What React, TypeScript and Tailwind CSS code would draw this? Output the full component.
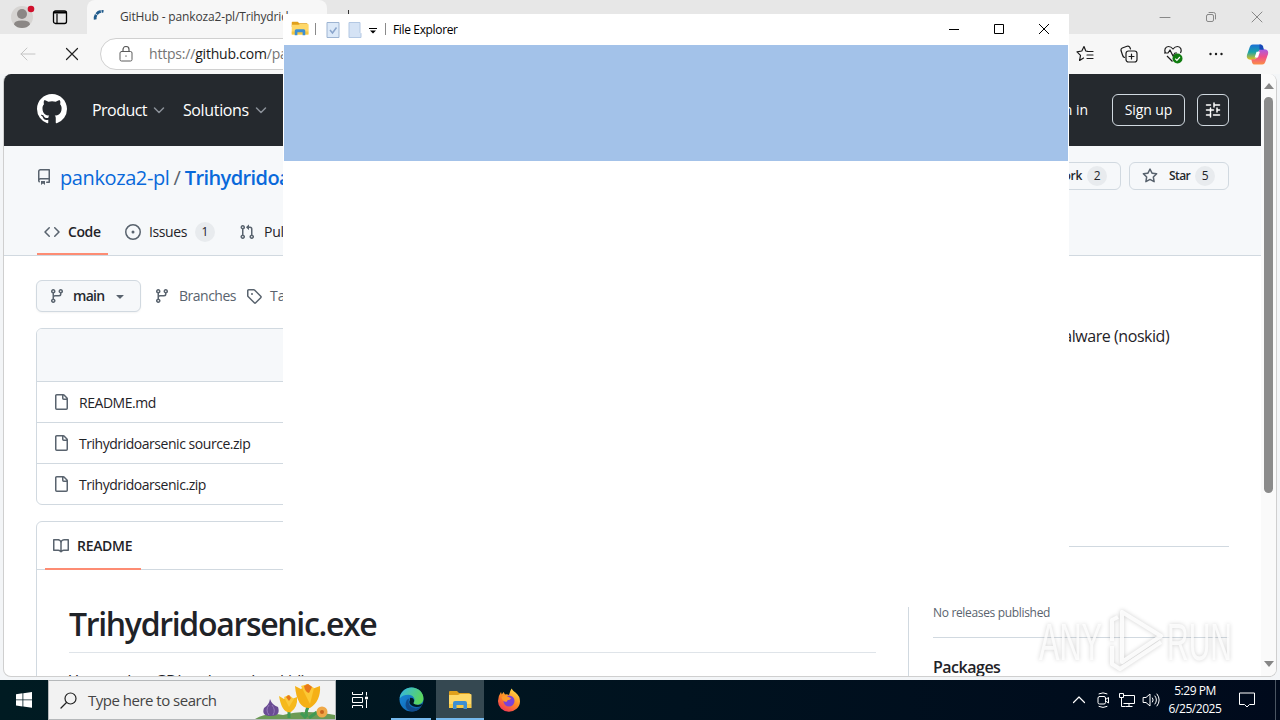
import type { ReactNode } from "react";
import clsx from "clsx";

const PATHS = {
  github:
    "M8 0c4.42 0 8 3.58 8 8a8.013 8.013 0 0 1-5.45 7.59c-.4.08-.55-.17-.55-.38 0-.27.01-1.13.01-2.2 0-.75-.25-1.23-.54-1.48 1.78-.2 3.65-.88 3.65-3.95 0-.88-.31-1.59-.82-2.15.08-.2.36-1.02-.08-2.12 0 0-.67-.22-2.2.82-.64-.18-1.32-.27-2-.27-.68 0-1.36.09-2 .27-1.53-1.03-2.2-.82-2.2-.82-.44 1.1-.16 1.92-.08 2.12-.51.56-.82 1.28-.82 2.15 0 3.06 1.86 3.75 3.64 3.95-.23.2-.44.55-.51 1.07-.46.21-1.61.55-2.33-.66-.15-.24-.6-.83-1.23-.82-.67.01-.27.38.01.53.34.19.73.9.82 1.13.16.45.68 1.31 2.69.94 0 .67.01 1.3.01 1.49 0 .21-.15.45-.55.38A7.995 7.995 0 0 1 0 8c0-4.42 3.58-8 8-8Z",
  repo: "M2 2.5A2.5 2.5 0 0 1 4.5 0h8.75a.75.75 0 0 1 .75.75v12.5a.75.75 0 0 1-.75.75h-2.5a.75.75 0 0 1 0-1.5h1.75v-2h-8a1 1 0 0 0-.714 1.7.75.75 0 1 1-1.072 1.05A2.495 2.495 0 0 1 2 11.5Zm10.5-1h-8a1 1 0 0 0-1 1v6.708A2.486 2.486 0 0 1 4.5 9h8ZM5 12.25a.25.25 0 0 1 .25-.25h3.5a.25.25 0 0 1 .25.25v3.25a.25.25 0 0 1-.4.2l-1.45-1.087a.249.249 0 0 0-.3 0L5.4 15.7a.25.25 0 0 1-.4-.2Z",
  code: "m11.28 3.22 4.25 4.25a.75.75 0 0 1 0 1.06l-4.25 4.25a.749.749 0 0 1-1.275-.326.749.749 0 0 1 .215-.734L13.94 8l-3.72-3.72a.749.749 0 0 1 .326-1.275.749.749 0 0 1 .734.215Zm-6.56 0a.751.751 0 0 1 1.042.018.751.751 0 0 1 .018 1.042L2.06 8l3.72 3.72a.749.749 0 0 1-.326 1.275.749.749 0 0 1-.734-.215L.47 8.53a.75.75 0 0 1 0-1.06Z",
  issue:
    "M8 9.5a1.5 1.5 0 1 0 0-3 1.5 1.5 0 0 0 0 3ZM8 0a8 8 0 1 1 0 16A8 8 0 0 1 8 0ZM1.5 8a6.5 6.5 0 1 0 13 0 6.5 6.5 0 0 0-13 0Z",
  pull: "M1.5 3.25a2.25 2.25 0 1 1 3 2.122v5.256a2.251 2.251 0 1 1-1.5 0V5.372A2.25 2.25 0 0 1 1.5 3.25Zm5.677-.177L9.573.677A.25.25 0 0 1 10 .854V2.5h1A2.5 2.5 0 0 1 13.5 5v5.628a2.251 2.251 0 1 1-1.5 0V5a1 1 0 0 0-1-1h-1v1.646a.25.25 0 0 1-.427.177L7.177 3.427a.25.25 0 0 1 0-.354ZM3.75 2.5a.75.75 0 1 0 0 1.5.75.75 0 0 0 0-1.5Zm0 9.5a.75.75 0 1 0 0 1.5.75.75 0 0 0 0-1.5Zm8.25.75a.75.75 0 1 0 1.5 0 .75.75 0 0 0-1.5 0Z",
  branch:
    "M9.5 3.25a2.25 2.25 0 1 1 3 2.122V6A2.5 2.5 0 0 1 10 8.5H6a1 1 0 0 0-1 1v1.128a2.251 2.251 0 1 1-1.5 0V5.372a2.25 2.25 0 1 1 1.5 0v1.836A2.493 2.493 0 0 1 6 7h4a1 1 0 0 0 1-1v-.628A2.25 2.25 0 0 1 9.5 3.25Zm-6 0a.75.75 0 1 0 1.5 0 .75.75 0 0 0-1.5 0Zm8.25-.75a.75.75 0 1 0 0 1.5.75.75 0 0 0 0-1.5ZM4.25 12a.75.75 0 1 0 0 1.5.75.75 0 0 0 0-1.5Z",
  tag: "M1 7.775V2.75C1 1.784 1.784 1 2.75 1h5.025c.464 0 .91.184 1.238.513l6.25 6.25a1.75 1.75 0 0 1 0 2.474l-5.026 5.026a1.75 1.75 0 0 1-2.474 0l-6.25-6.25A1.752 1.752 0 0 1 1 7.775Zm1.5 0c0 .066.026.13.073.177l6.25 6.25a.25.25 0 0 0 .354 0l5.025-5.025a.25.25 0 0 0 0-.354l-6.25-6.25a.25.25 0 0 0-.177-.073H2.75a.25.25 0 0 0-.25.25ZM6 5a1 1 0 1 1 0 2 1 1 0 0 1 0-2Z",
  file: "M2 1.75C2 .784 2.784 0 3.75 0h6.586c.464 0 .909.184 1.237.513l2.914 2.914c.329.328.513.773.513 1.237v9.586A1.75 1.75 0 0 1 13.25 16h-9.5A1.75 1.75 0 0 1 2 14.25Zm1.75-.25a.25.25 0 0 0-.25.25v12.5c0 .138.112.25.25.25h9.5a.25.25 0 0 0 .25-.25V6h-2.75A1.75 1.75 0 0 1 9 4.25V1.5Zm6.75.062V4.25c0 .138.112.25.25.25h2.688l-.011-.013-2.914-2.914-.013-.011Z",
  book: "M0 1.75A.75.75 0 0 1 .75 1h4.253c1.227 0 2.317.59 3 1.501A3.743 3.743 0 0 1 11.006 1h4.245a.75.75 0 0 1 .75.75v10.5a.75.75 0 0 1-.75.75h-4.507a2.25 2.25 0 0 0-1.591.659l-.622.621a.75.75 0 0 1-1.06 0l-.622-.621A2.25 2.25 0 0 0 5.258 13H.75a.75.75 0 0 1-.75-.75Zm7.251 10.324.004-5.073-.002-2.253A2.25 2.25 0 0 0 5.003 2.5H1.5v9h3.757a3.75 3.75 0 0 1 1.994.574ZM8.755 4.75l-.004 7.322a3.752 3.752 0 0 1 1.992-.572H14.5v-9h-3.495a2.25 2.25 0 0 0-2.25 2.25Z",
  star: "M8 .25a.75.75 0 0 1 .673.418l1.882 3.815 4.21.612a.75.75 0 0 1 .416 1.279l-3.046 2.97.719 4.192a.751.751 0 0 1-1.088.791L8 12.347l-3.766 1.98a.75.75 0 0 1-1.088-.79l.72-4.194L.818 6.374a.75.75 0 0 1 .416-1.28l4.21-.611L7.327.668A.75.75 0 0 1 8 .25Zm0 2.445L6.615 5.5a.75.75 0 0 1-.564.41l-3.097.45 2.24 2.184a.75.75 0 0 1 .216.664l-.528 3.084 2.769-1.456a.75.75 0 0 1 .698 0l2.77 1.456-.53-3.084a.75.75 0 0 1 .216-.664l2.24-2.183-3.096-.45a.75.75 0 0 1-.564-.41L8 2.694Z",
};

type IconProps = { name: keyof typeof PATHS; className?: string };

const Icon = ({ name, className }: IconProps) => (
  <svg
    viewBox="0 0 16 16"
    fill="currentColor"
    className={clsx("shrink-0", className, name !== "github" && "size-4")}
  >
    <path d={PATHS[name]} />
  </svg>
);

// thin line icons share this wrapper
const Line = ({
  className,
  box = 16,
  children,
}: {
  className?: string;
  box?: number;
  children: ReactNode;
}) => (
  <svg
    viewBox={`0 0 ${box} ${box}`}
    fill="none"
    stroke="currentColor"
    strokeLinecap="round"
    strokeLinejoin="round"
    className={clsx("shrink-0", className)}
  >
    {children}
  </svg>
);

const Folder = ({ className }: { className?: string }) => (
  <svg viewBox="0 0 24 20" className={clsx("shrink-0", className)}>
    <path d="M1 2q0-1 1-1h7l2 2h10q1 0 1 1v4H1Z" fill="#e0a01c" />
    <path d="M1 5h9l2-1h10.500q1 0 1 1v13H1Z" fill="#ffd868" />
    <path d="M1 14h22v4H1Z" fill="#f7c843" />
    <path d="M5 19v-6q0-2 2-2h10q2 0 2 2v6h-3.500v-4h-7v4Z" fill="#3d8fd1" />
  </svg>
);

const TabStrip = () => (
  <div className="flex h-[34px] shrink-0 bg-[#e7e7e7]">
    <div className="flex w-[87px] items-center pl-[11px]">
      <svg viewBox="0 0 24 24" className="size-6">
        <circle cx="11" cy="12" r="11" fill="#d6d4d2" />
        <circle cx="11" cy="9" r="5" fill="#8b8785" />
        <path d="M3 19.500q0-4 8-4t8 4q-3 3.500-8 3.500t-8-3.500Z" fill="#8b8785" />
        <circle cx="20" cy="4" r="3.300" fill="#d0102c" />
      </svg>
      <Line className="ml-[17px] size-4 text-black">
        <rect x="1.500" y="2" width="13" height="12.500" rx="2" strokeWidth="1.300" />
        <path d="M2 3.500h12" strokeWidth="2.200" />
        <path d="M5 5v9" strokeWidth="1.200" />
      </Line>
    </div>
    <div className="flex w-60 items-center rounded-t-lg bg-[#f7f7f7] pl-1.5">
      <Line className="size-4 text-[#205b8c]">
        <path
          d="M2.200 10.500A7 7 0 0 1 10.500 2.500"
          strokeWidth="2.800"
          strokeDasharray="5 .7"
          strokeLinecap="butt"
        />
      </Line>
      <span className="ml-[11px] w-[206px] overflow-hidden text-xs tracking-[-0.15px] whitespace-nowrap text-[#3c3c3c]">
        GitHub - pankoza2-pl/Trihydridoarsenic
      </span>
    </div>
    <div className="mt-2.5 ml-[21px] h-4 w-px bg-[#333]" />
    <div className="ml-auto flex items-center gap-[34px] pr-[17px] text-[#888]">
      <Line className="size-3" box={12}>
        <path d="M1 6.500h10" />
      </Line>
      <Line className="size-3" box={12}>
        <rect x="1.500" y="3.500" width="7" height="7" rx="1.500" />
        <path d="M4 1.500h4.500q2 0 2 2V8" />
      </Line>
      <Line className="size-3" box={12}>
        <path d="m1 1 10 10M11 1 1 11" />
      </Line>
    </div>
  </div>
);

const Toolbar = () => (
  <div className="flex h-10 shrink-0 items-center bg-[#f7f7f7] pr-[11px] pl-5">
    <Line className="size-4 text-[#c4c4c4]">
      <path d="M15 8H1m6-6L1 8l6 6" />
    </Line>
    <Line className="ml-7 size-4 text-[#222]">
      <path d="m2.500 2.500 11 11m0-11-11 11" strokeWidth="1.200" />
    </Line>
    <div className="ml-5 flex h-8 w-[960px] items-center rounded-full border border-[#d0d0d0] bg-white pl-[17px] text-sm">
      <Line className="size-4 text-[#5c5c5c]">
        <rect x="2" y="5.500" width="12" height="9.500" rx="1.500" />
        <path d="M5 5.500V3.500a3 3 0 0 1 6 0v2M8 9.800v.4" strokeWidth="1.200" />
      </Line>
      <span className="ml-[15px] tracking-[-0.2px] text-[#757575]">
        https://<span className="text-[#1b1b1b]">github.com</span>
        /pankoza2-pl/Trihydridoarsenic
      </span>
    </div>
    <div className="ml-auto flex items-center text-[#1b1b1b]">
      <Line className="size-[18px]" box={18}>
        <path
          d="M11.500 6.300 9.800 6 8 1.500 5.800 6 1 6.800l3.500 3.500L3.600 15.500 7.500 13M11.500 6.500H17M11 10h6M11 13.500h6"
          strokeWidth="1.200"
        />
      </Line>
      <Line className="ml-[26px] size-[18px]" box={18}>
        <rect x="6" y="6" width="11" height="11" rx="2.500" strokeWidth="1.200" />
        <path d="M11.500 9v5M9 11.500h5" strokeWidth="1.200" />
        <path
          d="M4.500 12.500Q3 12 2.500 10L1 5.500Q.7 3.800 2.300 3L7 1.300q2-.6 2.800 1L10.500 4"
          strokeWidth="1.200"
        />
      </Line>
      <svg viewBox="0 0 20 20" className="ml-[25px] size-5 shrink-0" fill="none">
        <path
          d="M2.500 9C1 6.500 2 2.500 5.500 2.500q2.500 0 4.500 2.500 2-2.500 4.500-2.500C18 2.500 19 6.500 17.500 9M1 9h4l2-3 3 6 2-3h2M4 12l5.500 5.500"
          stroke="#1b1b1b"
          strokeWidth="1.200"
          strokeLinejoin="round"
        />
        <circle cx="14.500" cy="14.500" r="5" fill="#107c10" />
        <path d="m12.200 14.600 1.700 1.700 3-3.300" stroke="#fff" strokeWidth="1.200" />
      </svg>
      <svg viewBox="0 0 16 16" fill="currentColor" className="ml-[25px] size-4">
        <circle cx="2.500" cy="8" r="1.200" />
        <circle cx="8" cy="8" r="1.200" />
        <circle cx="13.500" cy="8" r="1.200" />
      </svg>
      <svg viewBox="0 0 24 24" className="ml-[22px] size-[23px]">
        <defs>
          <linearGradient id="cpA" x1="0" y1="0" x2="0" y2="1">
            <stop offset="0" stopColor="#1b6fd8" />
            <stop offset=".5" stopColor="#1aa3a8" />
            <stop offset="1" stopColor="#e9c21c" />
          </linearGradient>
          <linearGradient id="cpB" x1="0" y1="0" x2="0" y2="1">
            <stop offset="0" stopColor="#a65de8" />
            <stop offset=".5" stopColor="#f0508a" />
            <stop offset="1" stopColor="#fb8f44" />
          </linearGradient>
        </defs>
        <path
          d="M7 1.500h8q2 0 2.600 2L18.500 7h-3q-2 0-2.700 2L10.500 16q-.6 1.500-2.500 1.500H4.500Q0 17 1 12.500L4 4q.8-2.500 3-2.500Z"
          fill="url(#cpA)"
        />
        <path
          d="M17 22.500H9q-2 0-2.600-2L5.500 17h3q2 0 2.700-2L13.500 8q.6-1.500 2.500-1.500h3.500Q24 7 23 11.500L20 20q-.8 2.500-3 2.500Z"
          fill="url(#cpB)"
        />
        <path d="m11 9-2 6h3.500l2-6Z" fill="#fff" />
        <path d="M14 1.500h1q2 0 2.600 2L18.500 7h-3l-1.500-.5Z" fill="#1848b8" />
      </svg>
    </div>
  </div>
);

const Chevron = () => (
  <Line className="ml-1 size-4 text-[#8b9199]">
    <path d="m3.500 6 4.500 4.500L12.500 6" strokeWidth="1.500" />
  </Line>
);

const SiteHeader = () => (
  <header className="flex h-[72px] shrink-0 items-center bg-[#25292e] pr-8 pl-[33px] text-white">
    <Icon name="github" className="mb-0.5 size-[30px]" />
    <span className="ml-[25px] text-base tracking-[-0.55px]">Product</span>
    <Chevron />
    <span className="ml-4 text-base tracking-[-0.35px]">Solutions</span>
    <Chevron />
    <span className="ml-auto text-sm">Sign in</span>
    <button className="ml-6 h-8 w-[73px] rounded-md border border-[#d1d9e0] text-sm tracking-[-0.1px]">
      Sign up
    </button>
    <button className="ml-3 flex size-8 items-center justify-center rounded-md border border-[#d1d9e0]">
      <Line className="size-4">
        <path
          d="M1.500 3h4M9 3h5.500M1.500 8h7M12 8h2.500M1.500 13h3.500M8.500 13h6M9 1v4M12 6v4M5.500 6v4M5.500 11v4"
          strokeWidth="1.500"
        />
      </Line>
    </button>
  </header>
);

const Count = ({ children }: { children: ReactNode }) => (
  <span className="flex h-5 min-w-5 items-center justify-center rounded-full bg-[#e8ebee] text-xs font-medium text-[#1f2328]">
    {children}
  </span>
);

const RepoHeader = () => (
  <div className="flex h-[110px] shrink-0 flex-col border-b border-[#d1d9e0] bg-[#f6f8fa] px-8">
    <div className="flex h-[62px] items-center text-xl">
      <Icon name="repo" className="text-[#59636e]" />
      <span className="mt-0.5 ml-2 tracking-[-0.4px] text-[#0969da]">
        pankoza2-pl
      </span>
      <span className="mx-1 mt-0.5 text-[#59636e]">/</span>
      <span className="mt-0.5 font-semibold tracking-[-0.6px] text-[#0969da]">
        Trihydridoarsenic
      </span>
      <div className="mb-0.5 ml-auto flex gap-2 text-xs font-semibold text-[#25292e]">
        <button className="flex h-7 w-[100px] items-center justify-end gap-[5px] rounded-md border border-[#d1d9e0] pr-[13px] tracking-[-0.3px]">
          Fork <Count>2</Count>
        </button>
        <button className="flex h-7 w-[100px] items-center rounded-md border border-[#d1d9e0] pl-3">
          <Icon name="star" className="text-[#59636e]" />
          <span className="mr-[5px] ml-[11px] tracking-[-0.6px]">Star</span>
          <Count>5</Count>
        </button>
      </div>
    </div>
    <nav className="mt-auto flex h-[47px] text-sm text-[#1f2328]">
      <div className="ml-px flex w-[71px] items-center border-b-2 border-[#fd8c73] pt-0.5 pl-[7px] font-semibold">
        <Icon name="code" className="text-[#59636e]" />
        <span className="ml-2 tracking-[-0.4px]">Code</span>
      </div>
      <div className="ml-4 flex items-center border-b-2 border-transparent pt-0.5 pl-px">
        <Icon name="issue" className="text-[#59636e]" />
        <span className="mr-2 ml-2 tracking-[-0.4px]">Issues</span>
        <Count>1</Count>
      </div>
      <div className="ml-6 flex items-center border-b-2 border-transparent pt-0.5">
        <Icon name="pull" className="text-[#59636e]" />
        <span className="ml-[9px] tracking-[-0.2px]">Pull requests</span>
      </div>
    </nav>
  </div>
);

const files = ["README.md", "Trihydridoarsenic source.zip", "Trihydridoarsenic.zip"];

const RepoBody = () => (
  <div className="flex pt-6 pr-8 pl-8">
    <main className="w-[873px] shrink-0">
      <div className="flex h-8 items-center text-sm font-semibold text-[#59636e]">
        <button className="flex h-8 w-[105px] items-center rounded-md border border-[#d1d9e0] bg-[#f6f8fa] pl-3 shadow-xs">
          <Icon name="branch" />
          <span className="ml-2 tracking-[-0.7px] text-[#25292e]">main</span>
          <svg viewBox="0 0 16 16" fill="currentColor" className="ml-2 size-4">
            <path d="m4.427 7.427 3.396 3.396a.25.25 0 0 0 .354 0l3.396-3.396A.25.25 0 0 0 11.396 7H4.604a.25.25 0 0 0-.177.427Z" />
          </svg>
        </button>
        <Icon name="branch" className="ml-[13px]" />
        <span className="ml-[9px] w-[59px] font-medium tracking-[-0.5px]">
          Branches
        </span>
        <Icon name="tag" className="ml-2" />
        <span className="ml-2 font-medium">Tags</span>
      </div>
      <div className="mt-4 overflow-hidden rounded-md border border-[#d1d9e0] text-sm text-[#1f2328]">
        <div className="h-[52px] bg-[#f6f8fa]" />
        {files.map((file) => (
          <div
            key={file}
            className="flex h-[41px] items-center border-t border-[#d1d9e0] pl-4"
          >
            <Icon name="file" className="text-[#59636e]" />
            <span className="mt-0.5 ml-2.5 tracking-[-0.46px]">{file}</span>
          </div>
        ))}
      </div>
      <div className="mt-4 rounded-md border border-[#d1d9e0] text-[#1f2328]">
        <div className="flex h-12 border-b border-[#d1d9e0] pl-2">
          <div className="-mb-px flex w-24 items-center border-b-2 border-[#fd8c73] pt-0.5 pl-2 text-sm font-semibold">
            <Icon name="book" className="text-[#59636e]" />
            <span className="ml-2 tracking-[-0.3px]">README</span>
          </div>
        </div>
        <div className="px-8 pt-8">
          <h1 className="h-[51px] border-b border-[#d1d9e0]/70 text-[32px] leading-[44px] font-semibold tracking-[-1.32px]">
            Trihydridoarsenic.exe
          </h1>
          <p className="mt-4 text-base tracking-[-0.45px]">
            Yet another GDI malware (noskid)
          </p>
        </div>
      </div>
    </main>
    <aside className="ml-6 w-[296px] shrink-0 text-[#1f2328]">
      <h2 className="h-11 text-base font-semibold">About</h2>
      <p className="h-[223px] border-b border-[#d1d9e0] text-base tracking-[-0.45px]">
        Yet another GDI malware (noskid)
      </p>
      <h2 className="mt-6 h-8 text-base font-semibold">Releases</h2>
      <p className="h-[35px] border-b border-[#d1d9e0] text-xs leading-5 tracking-[-0.33px] text-[#59636e]">
        No releases published
      </p>
      <h2 className="mt-[17px] text-base font-semibold tracking-[-0.5px]">
        Packages
      </h2>
    </aside>
  </div>
);

const Browser = () => (
  <div className="flex h-[680px] flex-col bg-[#f3f5f7]">
    <TabStrip />
    <Toolbar />
    <div className="mr-[3px] ml-[3px] flex h-[603px] overflow-hidden rounded-lg border-x border-b border-[#cfcfcf] bg-white">
      <div className="flex w-[1257px] shrink-0 flex-col overflow-hidden">
        <SiteHeader />
        <RepoHeader />
        <RepoBody />
      </div>
      <div className="flex flex-1 flex-col items-center bg-[#fafafa] pt-[9px] pb-[9px]">
        <svg viewBox="0 0 10 6" className="h-1.5 w-2.5" fill="#868686">
          <path d="M5 0 10 6H0Z" />
        </svg>
        <div className="mt-2 h-[396px] w-[9px] rounded-full bg-[#8b8b8b]" />
        <svg viewBox="0 0 10 6" className="mt-auto h-1.5 w-2.5" fill="#868686">
          <path d="M0 0h10L5 6Z" />
        </svg>
      </div>
    </div>
  </div>
);

const ExplorerWindow = () => (
  <div className="absolute top-[14px] left-[283px] flex h-[593px] w-[786px] flex-col bg-white">
    <div className="flex h-[31px] items-center pl-2">
      <Folder className="mb-0.5 h-[15px] w-[18px]" />
      <div className="mb-0.5 ml-1.5 h-3 w-px bg-[#8a8a8a]" />
      <svg viewBox="0 0 14 16" className="ml-[10px] h-4 w-3.5">
        <path d="M1 .5h12v15H1Z" fill="#dce9f8" stroke="#9db4d2" />
        <path d="m4 8 2.500 3L10.500 5.500" fill="none" stroke="#8aa5cc" strokeWidth="1.500" />
      </svg>
      <svg viewBox="0 0 14 16" className="ml-[8px] h-4 w-3.5">
        <path d="M1 .5h11v10l1 1v4H1Z" fill="#d5e3f5" stroke="#b3c8e3" />
      </svg>
      <svg viewBox="0 0 8 6" className="mt-0.5 ml-[7px] h-1.5 w-2" fill="#000">
        <path d="M0 0h8v1H0ZM1 2.500h6L4 5.500Z" />
      </svg>
      <div className="mb-0.5 ml-2 h-3 w-px bg-[#8a8a8a]" />
      <span className="ml-[7px] text-xs tracking-[-0.35px] text-black">
        File Explorer
      </span>
      <div className="ml-auto flex items-center gap-[35px] pr-5 pb-px text-black">
        <svg viewBox="0 0 10 10" className="size-2.5" stroke="currentColor">
          <path d="M0 5.500h10" />
        </svg>
        <svg viewBox="0 0 10 10" className="size-2.5" stroke="currentColor" fill="none">
          <path d="M.5.5h9v9h-9Z" />
        </svg>
        <svg viewBox="0 0 10 10" className="size-2.5" stroke="currentColor">
          <path d="m0 0 10 10M10 0 0 10" />
        </svg>
      </div>
    </div>
    <div className="mx-px h-[116px] bg-[#a3c2e9]" />
  </div>
);

const Watermark = () => (
  <svg
    viewBox="0 0 210 80"
    className="absolute top-[600px] left-[1030px] h-20 w-[210px] [filter:drop-shadow(0_0_2px_rgb(0_0_0/0.22))]"
    fill="#fff"
    fillOpacity="0.8"
    fontFamily="Liberation Sans"
    fontSize="51"
  >
    <text x="9" y="60" textLength="63" lengthAdjust="spacingAndGlyphs">
      ANY
    </text>
    <text x="137" y="60" textLength="65" lengthAdjust="spacingAndGlyphs">
      RUN
    </text>
    <g fill="none" stroke="#fff" strokeOpacity=".85" strokeWidth="4" strokeLinejoin="round">
      <path d="M92 12v50l39-26Z" />
      <path d="M82 41V20l6-3M82 46v18l8 5 41-27" />
    </g>
  </svg>
);

const Flowers = () => (
  <svg viewBox="0 0 80 38" className="h-[38px] w-20 shrink-0 self-end">
    <path d="M0 38q12-7 28-4 22-6 52 0v4Z" fill="#6b9a55" />
    <path d="M15 18q-1 6-6 9-3 8 7 8 10 0 7-9-6-2-8-8Z" fill="#6a4c94" />
    <path d="M14 24q-4 5 0 10M17 24q4 5 1 10" stroke="#9578bb" fill="none" />
    <path d="M34 29v8M53 26q-3 6-1 10M46 32l5 5M62 31l-8 6" stroke="#3f9a54" strokeWidth="3" fill="none" />
    <path d="m24 15 5 3 4-4 4 4 5-2q1 10-6 15-9 2-12-16Z" fill="#f6b91c" />
    <path d="m29 16 5-2 5 4-5 8Z" fill="#fbc93b" />
    <path d="m40 5 6 3 6-5 5 5 8-3q1 15-10 22-13 1-15-22Z" fill="#f5b016" />
    <path d="m46 5 7-2 6 4-4 16Z" fill="#fcc834" />
    <path d="m49 5 4-2 4 3-3 6q-4-1-5-7ZM31 16l3-2 2 3-2 3Z" fill="#e8781c" />
    <circle cx="67" cy="31" r="5.500" fill="#efa848" />
    <circle cx="67" cy="31" r="2" fill="#c8641c" />
  </svg>
);

const EdgeLogo = () => (
  <svg viewBox="0 0 24 24" className="size-[25px]">
    <defs>
      <linearGradient id="edgeTop" x1="0" y1="0" x2="1" y2=".4">
        <stop offset="0" stopColor="#33b5ea" />
        <stop offset="1" stopColor="#5bd65d" />
      </linearGradient>
      <linearGradient id="edgeLow" x1="0" y1="0" x2="1" y2="1">
        <stop offset="0" stopColor="#1b8fe0" />
        <stop offset="1" stopColor="#0c59a4" />
      </linearGradient>
    </defs>
    <circle cx="12" cy="12" r="11.500" fill="url(#edgeLow)" />
    <path
      d="M.6 11C1.300 4.800 6.500.5 12 .5c7 0 11.500 5 11.500 10.500 0 4-3 6-6.500 6-2.500 0-4-1-3-2.200 2.500-3-.5-7.300-5-7.300C5 7.500 2 9 .6 11Z"
      fill="url(#edgeTop)"
    />
    <path d="M9.500 11q-2 8 6 9.500 3.500.3 6-2.500-2 5.500-8.500 5.500Q5 22 6.500 15 7 12 9.500 11Z" fill="#114a8b" />
    <path d="M10.500 10.500q3-.5 4 2 .3 1.500-.5 2.300-1 1 1.500 2 4 1.200 7-.8l-1 2q-4 2-8 .5-5-2.500-3-6Z" fill="#001a24" />
  </svg>
);

const FirefoxLogo = () => (
  <svg viewBox="0 0 24 24" className="size-6">
    <defs>
      <linearGradient id="fox" x1=".8" y1="0" x2=".2" y2="1">
        <stop offset="0" stopColor="#ffe14a" />
        <stop offset=".5" stopColor="#ff8a24" />
        <stop offset="1" stopColor="#f0305c" />
      </linearGradient>
    </defs>
    <path
      d="M14.500.5q1.500 2.500 4 4 4.500 3.500 4.500 9A11 10.500 0 0 1 1 13Q1 8 4 4l.8 2.500L6.500 4 8 6.500q2-.5 4 .5 1-4 2.500-6.500Z"
      fill="url(#fox)"
    />
    <circle cx="12" cy="13" r="5.500" fill="#7a42d8" />
    <path d="M4.500 9q3.500-3 7 0 2 .5 2.500 1.500-1 1.500-3 1.500-1.500 1-1.500 2Q5 13.500 4.500 9Z" fill="#ff9a2a" />
  </svg>
);

const Taskbar = () => (
  <div className="flex h-10 bg-linear-to-r from-[#001b22] to-[#000a1c] text-white">
    <div className="flex w-12 items-center justify-center">
      <svg viewBox="0 0 16 16" className="size-4" fill="#fff">
        <path d="M0 2.200 6.500 1.300v6.200H0ZM7.300 1.200 16 0v7.500H7.300ZM0 8.300h6.500v6.200L0 13.600ZM7.300 8.300H16v7.500l-8.700-1.200Z" />
      </svg>
    </div>
    <div className="flex w-72 items-center border border-[#b5b8ba] bg-[#f2f2f2] pl-[11px]">
      <Line className="size-[17px] text-[#222]" box={17}>
        <circle cx="10.500" cy="6.500" r="5.500" strokeWidth="1.200" />
        <path d="M6.500 10.500 1 16" strokeWidth="1.300" />
      </Line>
      <span className="mr-auto ml-[11px] text-[15px] tracking-[-0.5px] text-[#444]">
        Type here to search
      </span>
      <Flowers />
    </div>
    <div className="flex w-12 items-center justify-center">
      <svg viewBox="0 0 16 16" className="size-4" fill="none" stroke="#fff">
        <path d="M.5 0v2.500h10V0M.5 5.500h10v5H.5ZM.5 16v-2.500h10V16M14.500 0v3.500M14.500 8v8" />
        <path d="M13.500 5h2v2h-2Z" fill="#fff" />
      </svg>
    </div>
    <div className="ml-[3px] flex w-12 flex-col items-center pt-[7px]">
      <EdgeLogo />
      <div className="mt-auto h-0.5 w-10 bg-[#76b9ed]" />
    </div>
    <div className="ml-px flex w-12 flex-col items-center bg-[#354851] pt-2.5">
      <Folder className="h-5 w-6" />
      <div className="mt-auto h-0.5 w-full bg-[#76b9ed]" />
    </div>
    <div className="ml-px flex w-12 items-center justify-center">
      <FirefoxLogo />
    </div>
    <div className="ml-auto flex items-center">
      <Line className="size-3.5" box={14}>
        <path d="m1.500 9.500 5.500-5.500 5.500 5.500" strokeWidth="1.200" />
      </Line>
      <Line className="ml-[9px] size-4">
        <rect x="3" y="4.500" width="7.500" height="7.500" rx="1.500" />
        <path d="m10.500 7.500 3-2v5.500l-3-2M4 1.800q4-2 8 0M4 14.500q4 2 8 0" />
      </Line>
      <svg viewBox="0 0 18 16" className="ml-[7px] h-4 w-[18px]" fill="none" stroke="#fff">
        <path d="M6 3.500h10.500v8H5.500M11 11.500v3M7.500 14.500h7M1.500 1.500h4v4h-4ZM3.500 5.500v5" />
        <path d="M3.500 10v4.500h4" />
      </svg>
      <Line className="ml-1.5 size-[18px]" box={18}>
        <path d="M1.500 6.500H4L8 3v12L4 11.500H1.500ZM10.500 7q1.500 2 0 4M13 5q3 4 0 8M15 3q4.500 6 0 12" />
      </Line>
      <div className="ml-[6px] w-[58px] text-center text-xs leading-[18px] tracking-[-0.45px] whitespace-nowrap">
        <div>5:29 PM</div>
        <div>6/25/2025</div>
      </div>
      <svg viewBox="0 0 16 16" className="mr-[20px] ml-[15px] size-4" fill="none" stroke="#fff">
        <path d="M.5 1h15v11.500h-5L8 15l-2.500-2.500h-5Z" />
      </svg>
      <div className="mr-1 h-10 w-px bg-[#4a5562]" />
    </div>
  </div>
);

export default function App() {
  return (
    <div className="relative h-[720px] w-[1280px] overflow-hidden font-['Open_Sans','Noto_Sans',sans-serif]">
      <Browser />
      <Taskbar />
      <ExplorerWindow />
      <Watermark />
    </div>
  );
}
